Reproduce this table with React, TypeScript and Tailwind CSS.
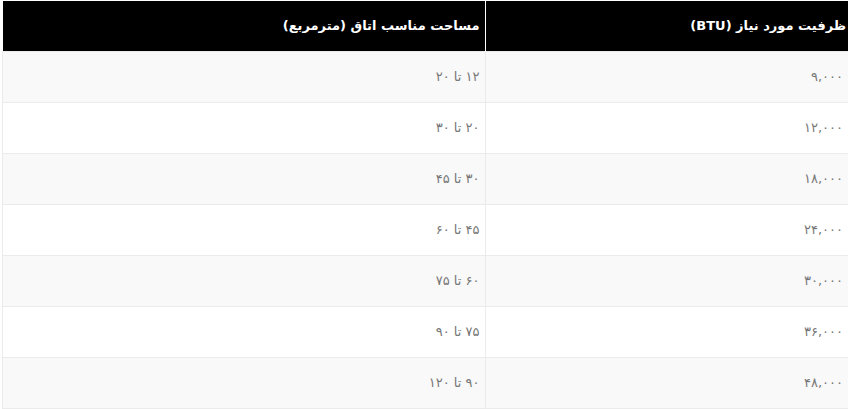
import type { JSX } from "react";

const rows: [string, string][] = [
  ["۹,۰۰۰", "۱۲ تا ۲۰"],
  ["۱۲,۰۰۰", "۲۰ تا ۳۰"],
  ["۱۸,۰۰۰", "۳۰ تا ۴۵"],
  ["۲۴,۰۰۰", "۴۵ تا ۶۰"],
  ["۳۰,۰۰۰", "۶۰ تا ۷۵"],
  ["۳۶,۰۰۰", "۷۵ تا ۹۰"],
  ["۴۸,۰۰۰", "۹۰ تا ۱۲۰"],
];

export default function App(): JSX.Element {
  return (
    <div className="bg-white w-[848px] h-[409px] overflow-hidden pl-[2px] pt-px">
      <table
        dir="rtl"
        className="w-[846px] border-collapse font-['DejaVu_Sans',sans-serif] text-right"
      >
        <thead>
          <tr className="bg-black text-white h-[50px]">
            <th className="w-[363px] pr-[2px] text-[13px] font-bold border-l border-white">
              ظرفیت مورد نیاز (BTU)
            </th>
            <th className="pr-[5px] text-[13px] font-bold">
              مساحت مناسب اتاق (مترمربع)
            </th>
          </tr>
        </thead>
        <tbody>
          {rows.map(([btu, area], i) => (
            <tr
              key={btu}
              className={`h-[51px] text-[13px] text-[#777] ${i % 2 === 0 ? "bg-[#f9f9f9]" : "bg-white"}`}
            >
              <td className="pr-[5px] border border-[#ebebeb] border-r-0">{btu}</td>
              <td className="pr-[5px] border border-[#ebebeb]">{area}</td>
            </tr>
          ))}
        </tbody>
      </table>
    </div>
  );
}
